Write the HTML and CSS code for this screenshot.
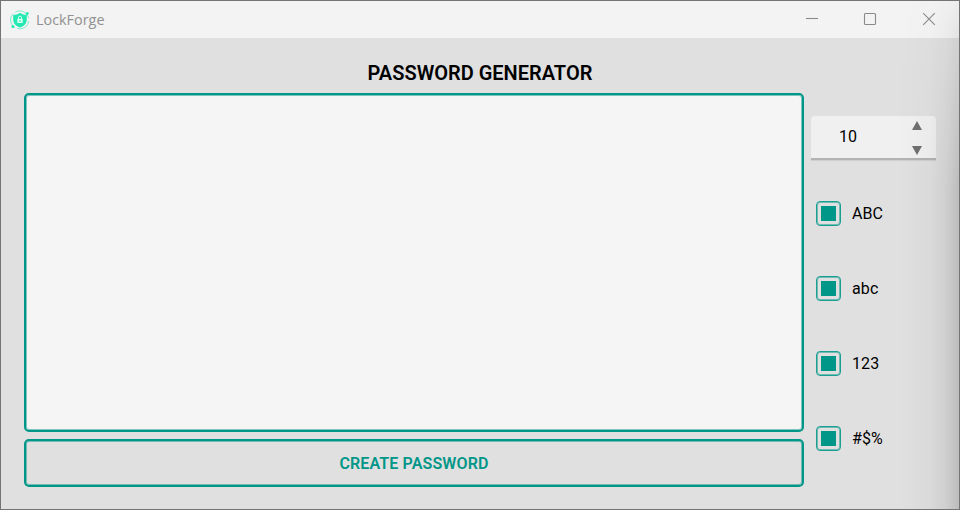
FILE: index.html
```
<!DOCTYPE html>
<html lang="en">
<head>
<meta charset="utf-8">
<title>LockForge</title>
<link rel="stylesheet" href="styles.css">
</head>
<body>
<div class="window">
  <header class="titlebar">
    <svg class="logo" width="20" height="20" viewBox="0 0 20 20">
      <path d="M5.2 2.1A9 9 0 0 1 18.6 8.2M18.9 11A9 9 0 0 1 7 18.4M5 17.7A9 9 0 0 1 3.2 3.6" fill="none" stroke="#7deccd" stroke-width="1"/>
      <circle cx="17.2" cy="3.6" r="1.5" fill="#24e8b2"/>
      <circle cx="2.9" cy="16.6" r="1.5" fill="#24e8b2"/>
      <path d="M10 2.8C12 4.3 14.3 5 16.8 5V9.5C16.8 13.5 14 16 10 17.6C6 16 3.2 13.5 3.2 9.5V5C5.7 5 8 4.3 10 2.8Z" fill="#24e8b2"/>
      <path d="M8.4 9V7.7A1.6 1.6 0 0 1 11.600 7.700V9" fill="none" stroke="#d8fff3" stroke-width="1"/>
      <rect x="7.3" y="8.8" width="5.4" height="4.2" rx=".6" fill="#d8fff3"/>
      <rect x="9.5" y="10" width="1" height="2" fill="#24e8b2"/>
    </svg>
    <span class="app-name">LockForge</span>
    <div class="controls">
      <svg width="58" height="37" viewBox="0 0 58 37"><path d="M23 17.5H35"/></svg>
      <svg width="58" height="37" viewBox="0 0 58 37"><rect x="23.5" y="12.5" width="11" height="11" rx="1"/></svg>
      <svg width="58" height="37" viewBox="0 0 58 37"><path d="M24.2 12.2L35.8 23.8M35.8 12.2L24.2 23.8"/></svg>
    </div>
  </header>
  <main class="content">
    <h1 class="heading">PASSWORD GENERATOR</h1>
    <div class="columns">
      <section class="main-column">
        <div class="output"></div>
        <button class="create" type="button">CREATE PASSWORD</button>
      </section>
      <aside class="options">
        <div class="spinbox">
          <span class="value">10</span>
          <svg class="arrows" width="10" height="34" viewBox="0 0 10 34"><path d="M5 0L10 9H0ZM0 25H10L5 34Z" fill="#707070"/></svg>
        </div>
        <div class="option"><span class="check"></span>ABC</div>
        <div class="option"><span class="check"></span>abc</div>
        <div class="option"><span class="check"></span>123</div>
        <div class="option"><span class="check"></span>#$%</div>
      </aside>
    </div>
  </main>
  <div class="edge-shade"></div>
</div>
</body>
</html>
```
FILE: styles.css
```
* { box-sizing: border-box; }

body {
  margin: 0;
  overflow: hidden;
  font-family: Roboto, "Liberation Sans", sans-serif;
  font-size: 16px;
  color: #000;
}

.window {
  position: relative;
  display: flex;
  flex-direction: column;
  width: 960px;
  height: 510px;
  border: 1px solid #757373;
  background: #e0e0e0;
}

.titlebar {
  display: flex;
  align-items: center;
  height: 37px;
  padding-left: 9px;
  background: #f3f3f3;
}

.app-name {
  margin-left: 6px;
  font-family: "Open Sans", "Noto Sans", sans-serif;
  font-size: 14.4px;
  line-height: 20px;
  color: #919191;
}

.controls {
  display: flex;
  margin-left: auto;
  margin-right: 2px;
}

.controls svg {
  fill: none;
  stroke: #8a8a8a;
  stroke-width: 1.1;
}

.content {
  flex: 1;
  padding: 23px 23px 22px;
}

.heading {
  margin: 0;
  height: 32px;
  line-height: 24px;
  font-size: 20px;
  font-weight: 600;
  text-align: center;
}

.columns {
  display: flex;
  gap: 7px;
}

.main-column {
  display: flex;
  flex-direction: column;
  gap: 7px;
  width: 780px;
}

.output,
.create {
  border: 2px solid #009688;
  border-radius: 5px;
  box-shadow: inset 0 0 0 1px rgba(0, 150, 136, 0.5);
}

.output {
  height: 339px;
  background: #f5f5f5;
}

.create {
  height: 48px;
  padding: 0;
  background: #e0e0e0;
  font-family: inherit;
  font-size: 16px;
  font-weight: 600;
  letter-spacing: 0.13px;
  color: #009688;
}

.options {
  width: 125px;
  padding-top: 23px;
}

.spinbox {
  display: flex;
  align-items: center;
  justify-content: space-between;
  height: 44px;
  margin-bottom: 16px;
  padding: 0 14px 0 28px;
  border-bottom: 2px solid #b3b3b3;
  border-radius: 4px 4px 0 0;
  background: #f0f0f0;
  box-shadow: 0 1px 0 #cfcfcf;
}

.value { margin-bottom: 2px; }

.arrows { margin-top: 2px; }

.option {
  display: flex;
  align-items: center;
  gap: 11px;
  height: 75px;
  padding-left: 5px;
  letter-spacing: 0.1px;
}

.check {
  width: 25px;
  height: 25px;
  padding: 4px;
  border: 1px solid #1a9f92;
  border-radius: 4px;
  background: #009688 content-box;
  box-shadow: inset 0 0 0 1px rgba(0, 150, 136, 0.5);
}

/* Soft shadow falling across the right side of the window */
.edge-shade {
  position: absolute;
  top: 0;
  right: 0;
  bottom: 0;
  width: 60px;
  pointer-events: none;
  background: linear-gradient(to right, rgba(0, 0, 0, 0), rgba(0, 0, 0, 0.025) 50%, rgba(0, 0, 0, 0.08) 80%, rgba(0, 0, 0, 0.16));
  mask-image: linear-gradient(to bottom, rgba(0, 0, 0, 0.15), rgba(0, 0, 0, 0.4) 36px, #000 190px);
}
```
